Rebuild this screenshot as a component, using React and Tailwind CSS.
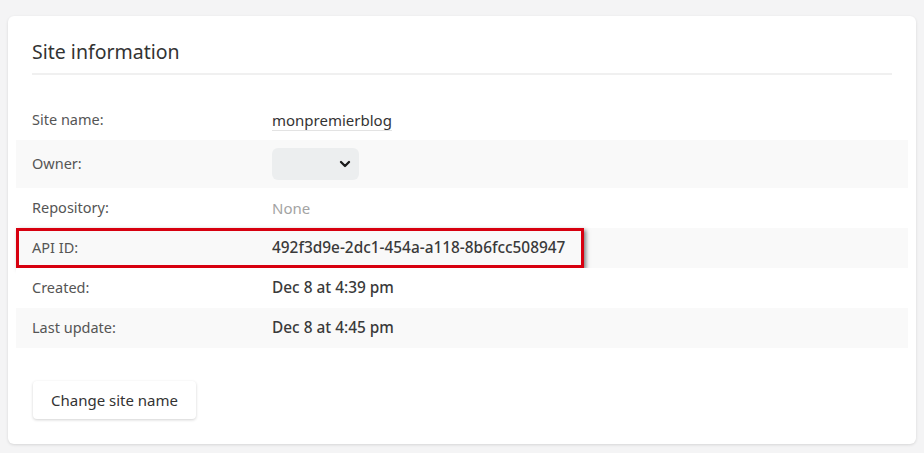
import { ChevronDown } from "lucide-react";

const rows = [
    { label: "Site name:", value: "monpremierblog", kind: "link" },
    { label: "Owner:", kind: "select" },
    { label: "Repository:", value: "None", kind: "muted" },
    { label: "API ID:", value: "492f3d9e-2dc1-454a-a118-8b6fcc508947", kind: "id", marked: true },
    { label: "Created:", value: "Dec 8 at 4:39 pm", kind: "bold" },
    { label: "Last update:", value: "Dec 8 at 4:45 pm", kind: "bold" },
];

function Value({ row }) {
    if (row.kind === "select") {
        return (
            <div className="w-[87px] h-[32px] rounded-md bg-[#eceeef] flex items-center justify-end pr-[6px]">
                <ChevronDown size={16} strokeWidth={3.5} className="text-[#1a1a1a]" />
            </div>
        );
    }
    if (row.kind === "link") {
        return <span className="text-[15px] text-[#333] border-b border-[#e3e3e3] leading-[20px]">{row.value}</span>;
    }
    if (row.kind === "muted") {
        return <span className="text-[15px] text-[#a3a3a3]">{row.value}</span>;
    }
    return <span className="text-[15.4px] font-medium text-[#3a3a3a]">{row.value}</span>;
}

export default function App() {
    return (
        <div className="min-h-[453px] bg-[#f4f4f5] pt-[16px] px-[8px] pb-[10px]" style={{ fontFamily: '"Noto Sans", "Open Sans", sans-serif' }}>
            <div className="bg-white rounded-md shadow-[0_1px_3px_rgba(0,0,0,0.12)] px-[8px] pt-[22px] pb-[25px]">
                <div className="px-[16px]">
                    <h2 className="text-[19.5px] text-[#333] leading-[28px] pb-[7px] border-b-2 border-[#f0f0f0]">Site information</h2>
                </div>

                <div className="mt-[25px]">
                    {rows.map((row, i) => (
                        <div key={row.label} className={`relative flex items-center px-[16px] ${row.kind === "select" ? "h-[48px]" : "h-[40px]"} ${i % 2 === 1 ? "bg-[#f9f9f9]" : "bg-white"}`}>
                            <div className="w-[240px] text-[14.5px] text-[#555]">{row.label}</div>
                            <Value row={row} />
                            {row.marked && (
                                <div className="absolute left-0 top-0 w-[568px] h-[40px] border-[3.5px] border-[#d7000f] shadow-[2px_2px_4px_rgba(0,0,0,0.5)]" />
                            )}
                        </div>
                    ))}
                </div>

                <div className="px-[17px] mt-[33px]">
                    <button className="h-[38px] px-[18px] rounded bg-white text-[15px] text-[#333] shadow-[0_1px_3px_rgba(0,0,0,0.18)]">
                        Change site name
                    </button>
                </div>
            </div>
        </div>
    );
}
